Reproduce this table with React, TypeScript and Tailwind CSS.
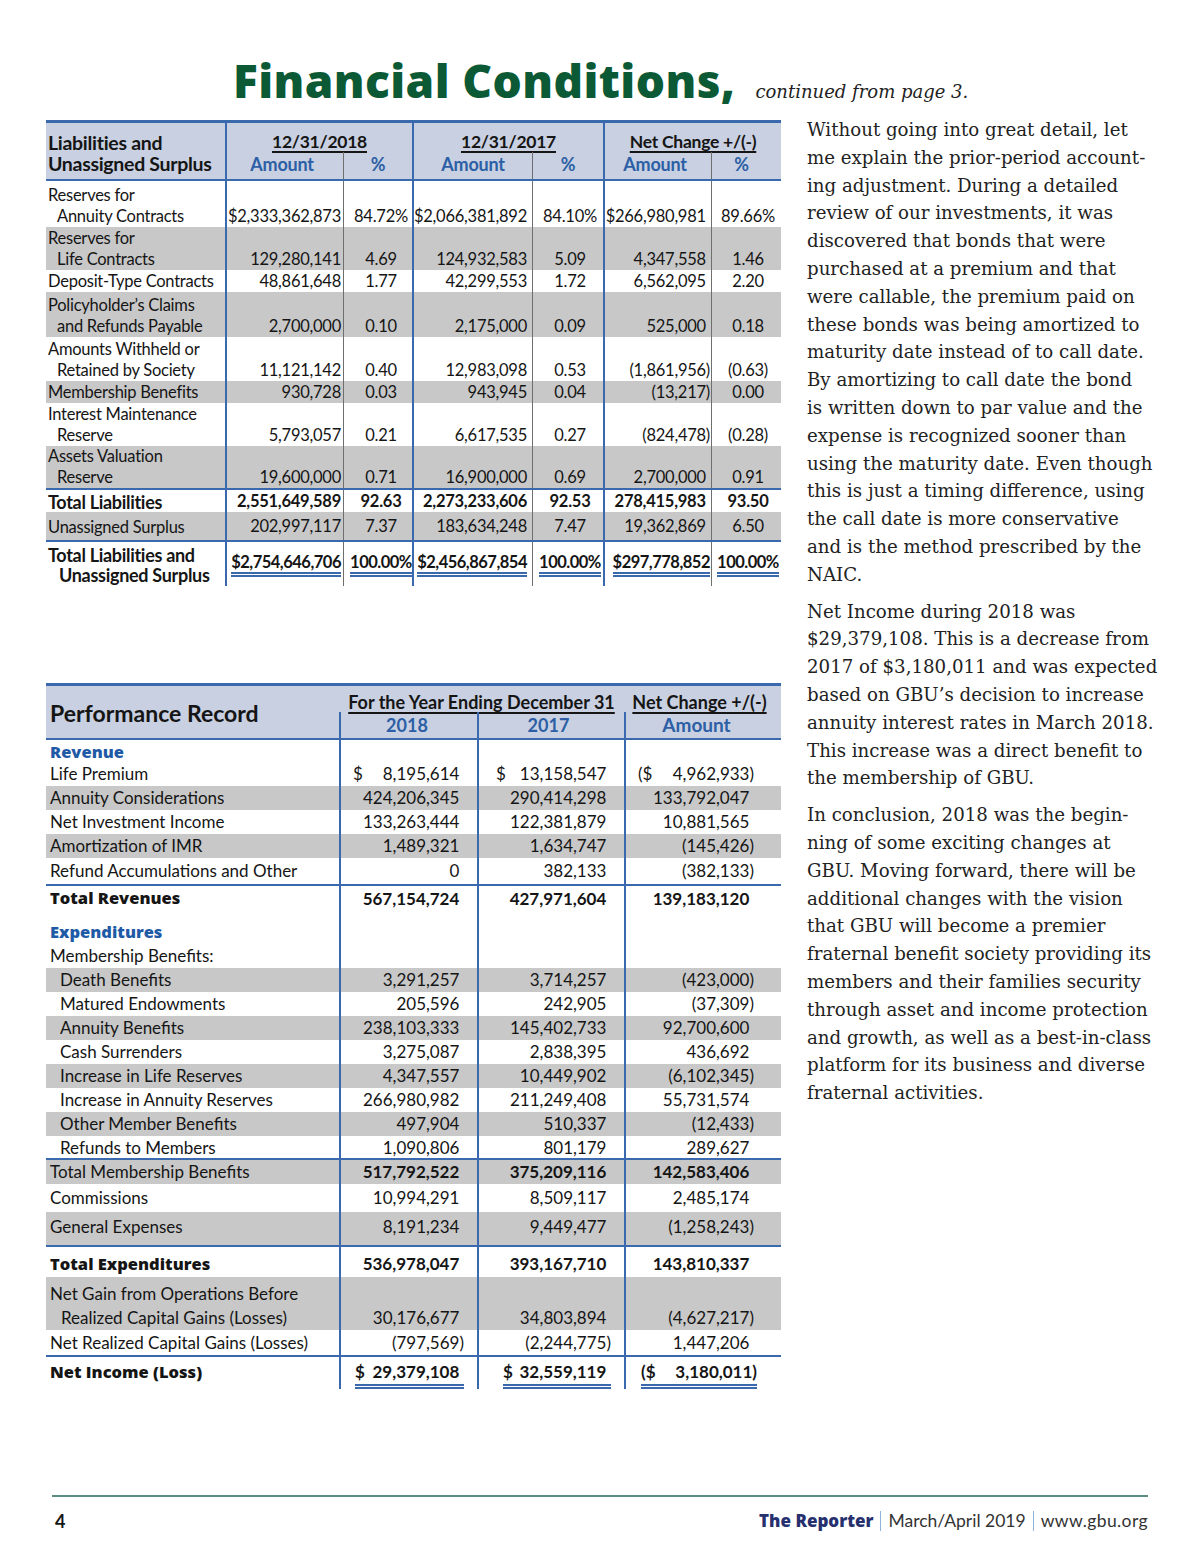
import React from 'react';

type LiabRow = {
  label: string[];
  vals: string[];
  h: string;
  gray?: boolean;
  bold?: boolean;
  cls?: string;
  center?: boolean;
  dbl?: boolean;
};

type PerfRow = {
  label: string[];
  vals?: string[];
  pre?: string[];
  h: string;
  align: string;
  gray?: boolean;
  indent?: boolean;
  heavy?: boolean;
  blue?: boolean;
  boldVals?: boolean;
  cls?: string;
  dbl?: boolean;
};

const cols1 = 'grid grid-cols-[179px_118px_69px_120px_71px_108px_70px]';
const cols2 = 'grid grid-cols-[293px_138px_147px_157px]';

const liabRows: LiabRow[] = [
  { label: ['Reserves for', 'Annuity Contracts'], vals: ['$2,333,362,873', '84.72%', '$2,066,381,892', '84.10%', '$266,980,981', '89.66%'], h: 'h-[46px]' },
  { label: ['Reserves for', 'Life Contracts'], vals: ['129,280,141', '4.69', '124,932,583', '5.09', '4,347,558', '1.46'], h: 'h-[43px]', gray: true },
  { label: ['Deposit-Type Contracts'], vals: ['48,861,648', '1.77', '42,299,553', '1.72', '6,562,095', '2.20'], h: 'h-[22px]' },
  { label: ['Policyholder’s Claims', 'and Refunds Payable'], vals: ['2,700,000', '0.10', '2,175,000', '0.09', '525,000', '0.18'], h: 'h-[45px]', gray: true },
  { label: ['Amounts Withheld or', 'Retained by Society'], vals: ['11,121,142', '0.40', '12,983,098', '0.53', '(1,861,956)', '(0.63)'], h: 'h-[44px]' },
  { label: ['Membership Benefits'], vals: ['930,728', '0.03', '943,945', '0.04', '(13,217)', '0.00'], h: 'h-[22px]', gray: true },
  { label: ['Interest Maintenance', 'Reserve'], vals: ['5,793,057', '0.21', '6,617,535', '0.27', '(824,478)', '(0.28)'], h: 'h-[43px]' },
  { label: ['Assets Valuation', 'Reserve'], vals: ['19,600,000', '0.71', '16,900,000', '0.69', '2,700,000', '0.91'], h: 'h-[42px]', gray: true },
  { label: ['Total Liabilities'], vals: ['2,551,649,589', '92.63', '2,273,233,606', '92.53', '278,415,983', '93.50'], h: 'h-[24px]', bold: true, cls: 'border-t-2 border-[#3a69ad]' },
  { label: ['Unassigned Surplus'], vals: ['202,997,117', '7.37', '183,634,248', '7.47', '19,362,869', '6.50'], h: 'h-[30px]', gray: true, center: true, cls: 'border-b-2 border-[#3a69ad]' },
  { label: ['Total Liabilities and', 'Unassigned Surplus'], vals: ['$2,754,646,706', '100.00%', '$2,456,867,854', '100.00%', '$297,778,852', '100.00%'], h: 'h-[44px]', bold: true, center: true, dbl: true },
];

const perfRows: PerfRow[] = [
  { label: ['Revenue'], h: 'h-[22px]', align: 'items-center', blue: true },
  { label: ['Life Premium'], vals: ['8,195,614', '13,158,547', '4,962,933)'], pre: ['$', '$', '($'], h: 'h-[24px]', align: 'items-center' },
  { label: ['Annuity Considerations'], vals: ['424,206,345', '290,414,298', '133,792,047'], h: 'h-[24px]', align: 'items-center', gray: true },
  { label: ['Net Investment Income'], vals: ['133,263,444', '122,381,879', '10,881,565'], h: 'h-[24px]', align: 'items-center' },
  { label: ['Amortization of IMR'], vals: ['1,489,321', '1,634,747', '(145,426)'], h: 'h-[24px]', align: 'items-center', gray: true },
  { label: ['Refund Accumulations and Other'], vals: ['0', '382,133', '(382,133)'], h: 'h-[26px]', align: 'items-center' },
  { label: ['Total Revenues'], vals: ['567,154,724', '427,971,604', '139,183,120'], h: 'h-[32px]', align: 'items-start pt-[1px]', heavy: true, boldVals: true, cls: 'border-t-2 border-[#3a69ad]' },
  { label: ['Expenditures'], h: 'h-[28px]', align: 'items-end', blue: true },
  { label: ['Membership Benefits:'], h: 'h-[24px]', align: 'items-center' },
  { label: ['Death Benefits'], vals: ['3,291,257', '3,714,257', '(423,000)'], h: 'h-[24px]', align: 'items-center', gray: true, indent: true },
  { label: ['Matured Endowments'], vals: ['205,596', '242,905', '(37,309)'], h: 'h-[24px]', align: 'items-center', indent: true },
  { label: ['Annuity Benefits'], vals: ['238,103,333', '145,402,733', '92,700,600'], h: 'h-[24px]', align: 'items-center', gray: true, indent: true },
  { label: ['Cash Surrenders'], vals: ['3,275,087', '2,838,395', '436,692'], h: 'h-[24px]', align: 'items-center', indent: true },
  { label: ['Increase in Life Reserves'], vals: ['4,347,557', '10,449,902', '(6,102,345)'], h: 'h-[24px]', align: 'items-center', gray: true, indent: true },
  { label: ['Increase in Annuity Reserves'], vals: ['266,980,982', '211,249,408', '55,731,574'], h: 'h-[24px]', align: 'items-center', indent: true },
  { label: ['Other Member Benefits'], vals: ['497,904', '510,337', '(12,433)'], h: 'h-[24px]', align: 'items-center', gray: true, indent: true },
  { label: ['Refunds to Members'], vals: ['1,090,806', '801,179', '289,627'], h: 'h-[22px]', align: 'items-center', indent: true },
  { label: ['Total Membership Benefits'], vals: ['517,792,522', '375,209,116', '142,583,406'], h: 'h-[26px]', align: 'items-center', gray: true, boldVals: true, cls: 'border-t-2 border-[#3a69ad]' },
  { label: ['Commissions'], vals: ['10,994,291', '8,509,117', '2,485,174'], h: 'h-[28px]', align: 'items-center' },
  { label: ['General Expenses'], vals: ['8,191,234', '9,449,477', '(1,258,243)'], h: 'h-[33px]', align: 'items-start pt-[3px]', gray: true },
  { label: ['Total Expenditures'], vals: ['536,978,047', '393,167,710', '143,810,337'], h: 'h-[32px]', align: 'items-center pt-[4px]', heavy: true, boldVals: true, cls: 'border-t-2 border-[#3a69ad]' },
  { label: ['Net Gain from Operations Before', 'Realized Capital Gains (Losses)'], vals: ['30,176,677', '34,803,894', '(4,627,217)'], h: 'h-[53px]', align: 'items-end', gray: true },
  { label: ['Net Realized Capital Gains (Losses)'], vals: ['(797,569)', '(2,244,775)', '1,447,206'], h: 'h-[25px]', align: 'items-end' },
  { label: ['Net Income (Loss)'], vals: ['29,379,108', '32,559,119', '3,180,011)'], pre: ['$', '$', '($'], h: 'h-[30px]', align: 'items-start pt-[3px]', heavy: true, boldVals: true, dbl: true, cls: 'border-t-2 border-[#3a69ad]' },
];

const paragraphs = [
  [
    'Without going into great detail, let',
    'me explain the prior-period account-',
    'ing adjustment. During a detailed',
    'review of our investments, it was',
    'discovered that bonds that were',
    'purchased at a premium and that',
    'were callable, the premium paid on',
    'these bonds was being amortized to',
    'maturity date instead of to call date.',
    'By amortizing to call date the bond',
    'is written down to par value and the',
    'expense is recognized sooner than',
    'using the maturity date. Even though',
    'this is just a timing difference, using',
    'the call date is more conservative',
    'and is the method prescribed by the',
    'NAIC.',
  ],
  [
    'Net Income during 2018 was',
    '$29,379,108. This is a decrease from',
    '2017 of $3,180,011 and was expected',
    'based on GBU’s decision to increase',
    'annuity interest rates in March 2018.',
    'This increase was a direct benefit to',
    'the membership of GBU.',
  ],
  [
    'In conclusion, 2018 was the begin-',
    'ning of some exciting changes at',
    'GBU. Moving forward, there will be',
    'additional changes with the vision',
    'that GBU will become a premier',
    'fraternal benefit society providing its',
    'members and their families security',
    'through asset and income protection',
    'and growth, as well as a best-in-class',
    'platform for its business and diverse',
    'fraternal activities.',
  ],
];

// keeps figures lined up when some of them close with a paren
const Num = ({ v }: { v: string }) => (
  <span>
    {v}
    {!v.endsWith(')') && <span className="invisible">)</span>}
  </span>
);

const Dbl = ({ children }: { children: React.ReactNode }) => (
  <span className="inline-block border-b-[5px] border-double border-[#3a69ad] leading-[20px] tracking-[-0.5px]">{children}</span>
);

const LiabTableRow = ({ r }: { r: LiabRow }) => {
  const al = r.center ? 'items-center' : 'items-end';
  const wrap = (v: string) => (r.dbl ? <Dbl>{v}</Dbl> : v);
  return (
    <div className={`${cols1} ${r.h} ${r.gray ? 'bg-[#c8c8c8]' : ''} ${r.bold ? 'font-bold' : ''} ${r.cls ?? ''}`}>
      <div
        className={`flex flex-col pl-[2px] ${r.center ? 'justify-center pt-[2px]' : 'justify-end'} ${
          r.bold ? 'text-[18px] leading-[20px] tracking-[-0.3px]' : ''
        }`}
      >
        {r.label.map((l, i) => (
          <span key={i} className={i > 0 ? (r.bold ? 'pl-[11px]' : 'pl-[9px]') : ''}>
            {l}
          </span>
        ))}
      </div>
      <div className={`flex ${al} justify-end pr-[2px] border-l-2 border-[#3a69ad]`}>{wrap(r.vals[0])}</div>
      <div className={`flex ${al} justify-center pl-[6px] border-l border-[#6f6f6f]`}>{wrap(r.vals[1])}</div>
      <div className={`flex ${al} justify-end pr-[5px] border-l-2 border-[#3a69ad]`}>{wrap(r.vals[2])}</div>
      <div className={`flex ${al} justify-center pl-[4px] border-l border-[#6f6f6f]`}>{wrap(r.vals[3])}</div>
      <div className={`flex ${al} justify-end pr-[1px] border-l-2 border-[#3a69ad]`}>
        {r.dbl ? <Dbl>{r.vals[4]}</Dbl> : <Num v={r.vals[4]} />}
      </div>
      <div className={`flex ${al} justify-center pl-[3px] border-l border-[#6f6f6f]`}>{wrap(r.vals[5])}</div>
    </div>
  );
};

const PerfValue = ({ v, pre, pl, pr, dbl }: { v?: string; pre?: string; pl: string; pr: string; dbl?: boolean }) => {
  if (!v) return null;
  if (pre) {
    return (
      <div className={`flex justify-between w-full ${pl} ${pr}`}>
        <div className={`flex justify-between w-full ${dbl ? 'border-b-[5px] border-double border-[#3a69ad]' : ''}`}>
          <span>{pre}</span>
          <Num v={v} />
        </div>
      </div>
    );
  }
  return (
    <div className={`w-full text-right ${pr}`}>
      <Num v={v} />
    </div>
  );
};

const PerfTableRow = ({ r }: { r: PerfRow }) => {
  const v = r.vals ?? [];
  const p = r.pre ?? [];
  const labelCls = r.blue
    ? "font-['Open_Sans',sans-serif] font-extrabold text-[16.5px] text-[#1f5aa6]"
    : r.heavy
    ? "font-['Open_Sans',sans-serif] font-extrabold text-[16.5px]"
    : '';
  return (
    <div className={`${cols2} ${r.h} ${r.gray ? 'bg-[#c8c8c8]' : ''} ${r.cls ?? ''}`}>
      <div className={`flex flex-col justify-center ${r.indent ? 'pl-[14px]' : 'pl-[4px]'} ${labelCls} ${r.align.includes('items-end') ? 'justify-end' : ''} ${r.align.includes('items-start') ? 'justify-start' : ''} ${r.align.includes('pt-[3px]') ? 'pt-[3px]' : ''} ${r.align.includes('pt-[4px]') ? 'pt-[4px]' : ''}`}>
        {r.label.map((l, i) => (
          <span key={i} className={i > 0 ? 'pl-[11px]' : ''}>
            {l}
          </span>
        ))}
      </div>
      <div className={`flex ${r.align} border-l-2 border-[#3a69ad] ${r.boldVals ? 'font-bold' : ''}`}>
        <PerfValue v={v[0]} pre={p[0]} pl={r.dbl ? 'pl-[14px]' : 'pl-[12px]'} pr="pr-[13px]" dbl={r.dbl} />
      </div>
      <div className={`flex ${r.align} border-l-2 border-[#3a69ad] ${r.boldVals ? 'font-bold' : ''}`}>
        <PerfValue v={v[1]} pre={p[1]} pl={r.dbl ? 'pl-[24px]' : 'pl-[17px]'} pr="pr-[13px]" dbl={r.dbl} />
      </div>
      <div className={`flex ${r.align} border-l-2 border-[#3a69ad] ${r.boldVals ? 'font-bold' : ''}`}>
        <PerfValue v={v[2]} pre={p[2]} pl={r.dbl ? 'pl-[15px]' : 'pl-[12px]'} pr={r.dbl ? 'pr-[24px]' : 'pr-[27px]'} dbl={r.dbl} />
      </div>
    </div>
  );
};

const App = () => {
  return (
    <div className="w-[1200px] h-[1558px] bg-white flex flex-col text-[#151515] font-['Lato',sans-serif]">
      {/* Title */}
      <div className="h-[116px] pt-[55px] pl-[233px] flex items-baseline gap-[20px] leading-[50px]">
        <h1 className="font-['Open_Sans',sans-serif] text-[46px] font-extrabold text-[#0c5a35] tracking-[0.4px]">Financial Conditions,</h1>
        <span className="font-['DejaVu_Serif',serif] italic text-[18px] text-[#222]">continued from page 3.</span>
      </div>

      <div className="flex">
        {/* Tables */}
        <div className="ml-[46px] w-[735px] mt-[4px]">
          <div className="text-[16.5px] leading-[21px] tracking-[-0.25px]">
            <div className={`${cols1} grid-rows-[29px_27px] bg-[#c8d0e1] border-t-[3px] border-b-2 border-[#3a69ad] leading-[20px]`}>
              <div className="row-span-2 flex flex-col justify-center pt-[3px] pl-[2px] text-[19.5px] leading-[21px] font-bold tracking-[-0.3px]">
                <span>Liabilities and</span>
                <span>Unassigned Surplus</span>
              </div>
              <div className="col-span-2 flex items-end justify-center border-l-2 border-[#3a69ad] text-[17.5px] font-bold">
                <span className="underline decoration-[1.5px] underline-offset-[3px]">12/31/2018</span>
              </div>
              <div className="col-span-2 flex items-end justify-center border-l-2 border-[#3a69ad] text-[17.5px] font-bold">
                <span className="underline decoration-[1.5px] underline-offset-[3px]">12/31/2017</span>
              </div>
              <div className="col-span-2 flex items-end justify-center border-l-2 border-[#3a69ad] text-[17.5px] font-bold">
                <span className="underline decoration-[1.5px] underline-offset-[3px]">Net Change +/(-)</span>
              </div>
              <div className="flex items-center justify-center pr-[6px] pb-[4px] border-l-2 border-[#3a69ad] text-[18px] font-bold text-[#2c5fa5]">Amount</div>
              <div className="flex items-center justify-center pb-[4px] border-l border-[#6f6f6f] text-[18px] font-bold text-[#2c5fa5]">%</div>
              <div className="flex items-center justify-center pb-[4px] border-l-2 border-[#3a69ad] text-[18px] font-bold text-[#2c5fa5]">Amount</div>
              <div className="flex items-center justify-center pb-[4px] border-l border-[#6f6f6f] text-[18px] font-bold text-[#2c5fa5]">%</div>
              <div className="flex items-center justify-center pr-[6px] pb-[4px] border-l-2 border-[#3a69ad] text-[18px] font-bold text-[#2c5fa5]">Amount</div>
              <div className="flex items-center justify-center pr-[10px] pb-[4px] border-l border-[#6f6f6f] text-[18px] font-bold text-[#2c5fa5]">%</div>
            </div>
            {liabRows.map((r, i) => (
              <LiabTableRow key={i} r={r} />
            ))}
          </div>

          <div className="mt-[97px] text-[17px] leading-[24px]">
            <div className={`${cols2} grid-rows-[26px_26px] bg-[#c8d0e1] border-t-[3px] border-b-2 border-[#3a69ad] font-bold text-[18px]`}>
              <div className="row-span-2 flex items-center pl-[4px] pt-[2px] text-[23px]">Performance Record</div>
              <div className="col-span-2 flex items-end justify-center">
                <span className="underline decoration-[1.5px] underline-offset-[3px] leading-[20px]">For the Year Ending December 31</span>
              </div>
              <div className="flex items-end justify-center pr-[6px]">
                <span className="underline decoration-[1.5px] underline-offset-[3px] leading-[20px]">Net Change +/(-)</span>
              </div>
              <div className="flex items-center justify-center pr-[4px] border-l-2 border-[#3a69ad] text-[#2c5fa5]">2018</div>
              <div className="flex items-center justify-center pr-[6px] border-l-2 border-[#3a69ad] text-[#2c5fa5]">2017</div>
              <div className="flex items-center justify-center pr-[14px] border-l-2 border-[#3a69ad] text-[#2c5fa5] text-[19px]">Amount</div>
            </div>
            {perfRows.map((r, i) => (
              <PerfTableRow key={i} r={r} />
            ))}
          </div>
        </div>

        {/* Article text */}
        <div className="ml-[26px] w-[370px] font-['DejaVu_Serif',serif] text-[18.2px] leading-[27.8px] text-[#222]">
          {paragraphs.map((para, i) => (
            <p key={i} className={i > 0 ? 'mt-[9px]' : ''}>
              {para.map((line, j) => (
                <span key={j} className="block whitespace-nowrap">
                  {line}
                </span>
              ))}
            </p>
          ))}
        </div>
      </div>

      {/* Footer */}
      <div className="mt-auto px-[52px] pb-[25px]">
        <div className="h-[2px] bg-[#5b8b83]" />
        <div className="mt-[12px] flex justify-between items-center leading-[24px] pl-[3px]">
          <span className="font-bold text-[18px]">4</span>
          <div className="flex items-center text-[17.5px] text-[#333]">
            <span className="font-['Open_Sans',sans-serif] font-extrabold text-[17px] text-[#27306f]">The Reporter</span>
            <span className="mx-[7px] w-px h-[20px] bg-[#8fb4d9]" />
            <span>March/April 2019</span>
            <span className="mx-[7px] w-px h-[20px] bg-[#8fb4d9]" />
            <span className="tracking-[0.4px]">www.gbu.org</span>
          </div>
        </div>
      </div>
    </div>
  );
};

export default App;
